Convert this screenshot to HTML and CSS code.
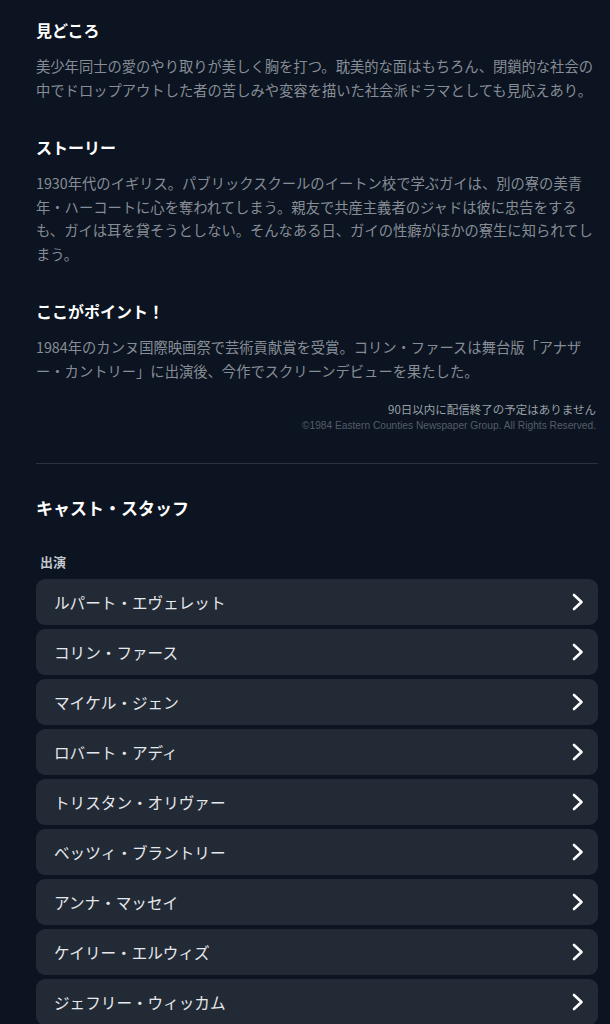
FILE: index.html
```html
<!DOCTYPE html>
<html lang="ja">
<head>
<meta charset="utf-8">
<link rel="stylesheet" href="styles.css">
</head>
<body>
<main class="page">
  <section class="sec first">
    <h2 class="sec-title">見どころ</h2>
    <p class="sec-body">美少年同士の愛のやり取りが美しく胸を打つ。耽美的な面はもちろん、閉鎖的な社会の中でドロップアウトした者の苦しみや変容を描いた社会派ドラマとしても見応えあり。</p>
  </section>
  <section class="sec">
    <h2 class="sec-title">ストーリー</h2>
    <p class="sec-body">1930年代のイギリス。パブリックスクールのイートン校で学ぶガイは、別の寮の美青年・ハーコートに心を奪われてしまう。親友で共産主義者のジャドは彼に忠告をするも、ガイは耳を貸そうとしない。そんなある日、ガイの性癖がほかの寮生に知られてしまう。</p>
  </section>
  <section class="sec">
    <h2 class="sec-title">ここがポイント！</h2>
    <p class="sec-body">1984年のカンヌ国際映画祭で芸術貢献賞を受賞。コリン・ファースは舞台版「アナザー・カントリー」に出演後、今作でスクリーンデビューを果たした。</p>
  </section>
  <div class="meta">
    <p class="notice">90日以内に配信終了の予定はありません</p>
    <p class="copy">©1984 Eastern Counties Newspaper Group. All Rights Reserved.</p>
  </div>
  <hr class="divider">
  <section class="cast">
    <h2 class="cast-title">キャスト・スタッフ</h2>
    <h3 class="cast-label">出演</h3>
    <ul class="cast-list">
      <li class="cast-item"><span>ルパート・エヴェレット</span><svg class="chev" viewBox="0 0 12 18" width="12" height="18"><polyline points="2,2 9.5,9 2,16"/></svg></li>
      <li class="cast-item"><span>コリン・ファース</span><svg class="chev" viewBox="0 0 12 18" width="12" height="18"><polyline points="2,2 9.5,9 2,16"/></svg></li>
      <li class="cast-item"><span>マイケル・ジェン</span><svg class="chev" viewBox="0 0 12 18" width="12" height="18"><polyline points="2,2 9.5,9 2,16"/></svg></li>
      <li class="cast-item"><span>ロバート・アディ</span><svg class="chev" viewBox="0 0 12 18" width="12" height="18"><polyline points="2,2 9.5,9 2,16"/></svg></li>
      <li class="cast-item"><span>トリスタン・オリヴァー</span><svg class="chev" viewBox="0 0 12 18" width="12" height="18"><polyline points="2,2 9.5,9 2,16"/></svg></li>
      <li class="cast-item"><span>ベッツィ・ブラントリー</span><svg class="chev" viewBox="0 0 12 18" width="12" height="18"><polyline points="2,2 9.5,9 2,16"/></svg></li>
      <li class="cast-item"><span>アンナ・マッセイ</span><svg class="chev" viewBox="0 0 12 18" width="12" height="18"><polyline points="2,2 9.5,9 2,16"/></svg></li>
      <li class="cast-item"><span>ケイリー・エルウィズ</span><svg class="chev" viewBox="0 0 12 18" width="12" height="18"><polyline points="2,2 9.5,9 2,16"/></svg></li>
      <li class="cast-item"><span>ジェフリー・ウィッカム</span><svg class="chev" viewBox="0 0 12 18" width="12" height="18"><polyline points="2,2 9.5,9 2,16"/></svg></li>
    </ul>
  </section>
</main>
</body>
</html>
```
FILE: styles.css
```css
html, body {
  margin: 0;
  padding: 0;
  background: #0b1420;
}
body {
  font-family: "Noto Sans CJK JP", "Noto Sans", sans-serif;
  color: #ffffff;
  overflow: hidden;
  height: 1024px;
}
.page {
  padding: 18px 12px 0 36px;
}
.sec + .sec {
  margin-top: 34px;
}
.sec-title {
  margin: 0;
  font-size: 16px;
  line-height: 24px;
  font-weight: 700;
  color: #ffffff;
}
.sec-body {
  margin: 12px 0 0;
  font-size: 14.3px;
  line-height: 23.5px;
  color: #878d96;
}
.meta {
  margin-top: 19px;
  text-align: right;
  padding-right: 2px;
}
.notice {
  margin: 0;
  font-size: 11.5px;
  line-height: 16px;
  color: #9aa0a8;
}
.copy {
  margin: 2px 0 0;
  font-family: "Liberation Sans", Arial, sans-serif;
  font-size: 10.2px;
  line-height: 14px;
  color: #555d69;
}
.divider {
  margin: 30px 0 0;
  border: 0;
  height: 1px;
  background: #29323e;
}
.cast-title {
  margin: 32px 0 0;
  font-size: 17px;
  line-height: 24px;
  font-weight: 700;
}
.cast-label {
  margin: 33px 0 0;
  padding-left: 4px;
  font-size: 13px;
  line-height: 18px;
  font-weight: 700;
  color: #c3c7cd;
}
.cast-list {
  list-style: none;
  margin: 8px 0 0;
  padding: 0;
  display: flex;
  flex-direction: column;
  gap: 4px;
}
.cast-item {
  height: 46px;
  display: flex;
  align-items: center;
  justify-content: space-between;
  padding: 0 14px 0 18px;
  background: #222a36;
  border-radius: 9px;
  font-size: 15.6px;
  color: #e6e8eb;
}
.chev {
  fill: none;
  stroke: #ffffff;
  stroke-width: 2.6;
  stroke-linecap: round;
  stroke-linejoin: round;
}
```
